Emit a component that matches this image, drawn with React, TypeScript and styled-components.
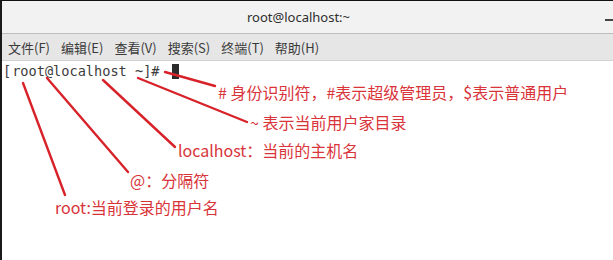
import React from "react";
import styled, { createGlobalStyle } from "styled-components";

const Global = createGlobalStyle`
  html, body { margin: 0; padding: 0; background: #fff; }
  body { width: 613px; height: 260px; overflow: hidden; }
`;

const Window = styled.div`
  position: relative;
  width: 613px;
  height: 260px;
  box-sizing: border-box;
  border-top: 1px solid #111;
  border-left: 2px solid #1a1a1a;
  background: #fff;
  display: flex;
  flex-direction: column;
  font-family: "Noto Sans", "Noto Sans CJK SC", sans-serif;
`;

const TitleBar = styled.div`
  height: 32px;
  background: #f2f2f2;
  border-bottom: 1px solid #bdbdbd;
  display: flex;
  align-items: center;
  justify-content: center;
  position: relative;
  padding-right: 18px;
  font-size: 13px;
  color: #2e2e2e;
`;

const Minimize = styled.span`
  position: absolute;
  right: 0;
  top: 18px;
  width: 8px;
  height: 2px;
  background: #444;
`;

const MenuBar = styled.div`
  height: 26px;
  background: #e6e6e6;
  border-bottom: 1px solid #d2d2d2;
  display: flex;
  align-items: center;
  gap: 11px;
  padding-left: 6px;
  font-family: "Noto Sans CJK SC", sans-serif;
  font-size: 13px;
  color: #3a3a3a;
`;

const MenuItem = styled.span`
  white-space: nowrap;
`;

const Terminal = styled.div`
  padding: 2px 0 0 1px;
  font-family: "DejaVu Sans Mono", monospace;
  font-size: 13.6px;
  line-height: 16px;
  color: #3c3c3c;
  display: flex;
  align-items: center;
  height: 16px;
  white-space: pre;
`;

const Bracket = styled.span`
  margin-right: 1px;
`;

const Cursor = styled.span`
  display: inline-block;
  width: 7px;
  height: 15px;
  background: #2b2b2b;
  margin-left: 4px;
`;

const Overlay = styled.svg`
  position: absolute;
  left: -2px;
  top: -1px;
  pointer-events: none;
`;

const Label = styled.div<{ $x: number; $y: number }>`
  position: absolute;
  left: ${(p) => p.$x - 2}px;
  top: ${(p) => p.$y - 1}px;
  font-family: "Noto Sans CJK SC", "Noto Sans", sans-serif;
  font-size: 16px;
  line-height: 20px;
  color: #d9343a;
  white-space: nowrap;
`;

const lines: [number, number, number, number][] = [
  [165, 72, 215, 86],
  [138, 78, 247, 122],
  [103, 80, 175, 147],
  [47, 78, 128, 172],
  [23, 83, 65, 195],
];

export default function App() {
  return (
    <>
      <Global />
      <Window>
        <TitleBar>
          root@localhost:~
          <Minimize />
        </TitleBar>
        <MenuBar>
          <MenuItem>文件(F)</MenuItem>
          <MenuItem>编辑(E)</MenuItem>
          <MenuItem>查看(V)</MenuItem>
          <MenuItem>搜索(S)</MenuItem>
          <MenuItem>终端(T)</MenuItem>
          <MenuItem>帮助(H)</MenuItem>
        </MenuBar>
        <Terminal>
          <Bracket>[</Bracket>
          {"root@localhost ~]# "}
          <Cursor />
        </Terminal>
        <Overlay width="613" height="260" viewBox="0 0 613 260">
          {lines.map(([x1, y1, x2, y2], i) => (
            <line key={i} x1={x1} y1={y1} x2={x2} y2={y2} stroke="#d8222a" strokeWidth="2.4" strokeLinecap="round" />
          ))}
        </Overlay>
        <Label $x={218} $y={82}># 身份识别符，#表示超级管理员，$表示普通用户</Label>
        <Label $x={250} $y={112}>~ 表示当前用户家目录</Label>
        <Label $x={178} $y={140}>localhost：当前的主机名</Label>
        <Label $x={130} $y={170}>@：分隔符</Label>
        <Label $x={55} $y={197}>root:当前登录的用户名</Label>
      </Window>
    </>
  );
}
